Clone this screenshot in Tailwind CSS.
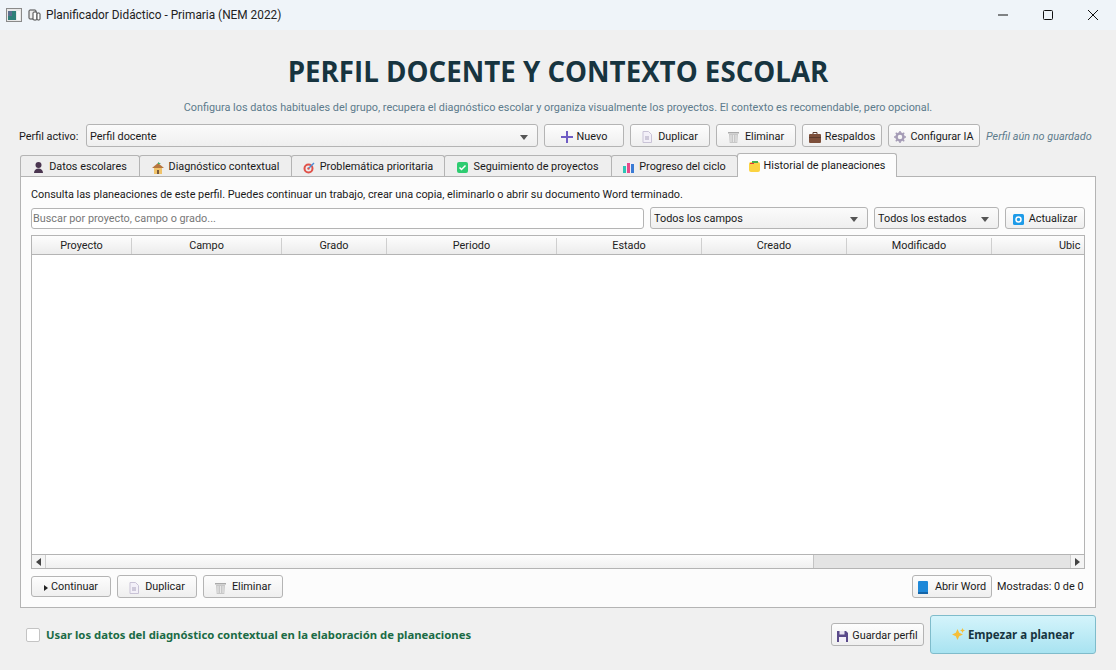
<!DOCTYPE html>
<html lang="es">
<head>
  <meta charset="UTF-8" />
  <title>Planificador Didáctico - Primaria (NEM 2022)</title>
  <script src="https://cdn.jsdelivr.net/npm/@tailwindcss/browser@4"></script>
</head>
<body class="w-[1116px] h-[670px] overflow-hidden bg-[#f0f0f0] text-[10.85px] leading-none text-[#1a1a1a] font-['Roboto','Open_Sans',sans-serif]">

  <!-- Title bar -->
  <header class="h-[30px] bg-[#eff4f9] flex items-center">
    <svg class="ml-[6px] w-[16px] h-[14px]" viewBox="0 0 16 14"><rect x="0.5" y="0.5" width="15" height="13" fill="#e8e8e8" stroke="#8a8a8a"/><rect x="2" y="3" width="8" height="9" fill="#2f7f78"/><rect x="2" y="3" width="4" height="5" fill="#5a6f8f"/><rect x="11" y="3" width="3" height="9" fill="#f8f8f8"/></svg>
    <svg class="ml-[6px] w-[14px] h-[14px]" viewBox="0 0 14 14" fill="none" stroke="#444"><rect x="1" y="2" width="7" height="9" rx="1" fill="#eee"/><rect x="5" y="4" width="4" height="8" rx="1" fill="#fff"/><rect x="9" y="5" width="3" height="7" rx="1" fill="#fff"/></svg>
    <span class="ml-[4px] pt-[2px] text-[11.85px] text-[#222]">Planificador Didáctico - Primaria (NEM 2022)</span>
    <div class="ml-auto flex items-center text-black">
      <div class="w-[46px] flex justify-center"><svg class="w-[10px] h-[10px]" viewBox="0 0 10 10"><path d="M0 5h10" stroke="#111"/></svg></div>
      <div class="w-[44px] flex justify-center"><svg class="w-[10px] h-[10px]" viewBox="0 0 10 10"><rect x="0.5" y="0.5" width="9" height="9" rx="1" fill="none" stroke="#111"/></svg></div>
      <div class="w-[46px] flex justify-center"><svg class="w-[10px] h-[10px]" viewBox="0 0 10 10"><path d="M0 0l10 10M10 0L0 10" stroke="#111"/></svg></div>
    </div>
  </header>

  <main class="px-[20px] relative">
    <h1 class="mt-[26px] h-[32px] flex items-center justify-center text-[27.7px] font-bold font-['Open_Sans',sans-serif] text-[#17343f]">PERFIL DOCENTE Y CONTEXTO ESCOLAR</h1>
    <p class="mt-[13px] h-[14px] flex items-center justify-center text-[#5d7b8c]">Configura los datos habituales del grupo, recupera el diagnóstico escolar y organiza visualmente los proyectos. El contexto es recomendable, pero opcional.</p>

    <!-- Perfil row -->
    <div class="mt-[9px] -ml-px flex items-center h-[23px] whitespace-nowrap">
      <span class="w-[67px] shrink-0 pt-[3px]">Perfil activo:</span>
      <div class="w-[452px] shrink-0 h-[23px] pt-[3px] flex items-center justify-between px-[3px] border border-[#b4b4b4] rounded-[3px] bg-gradient-to-b from-[#fbfbfb] to-[#efefef]">
        <span>Perfil docente</span>
        <span class="mr-[6px] border-x-[4px] border-x-transparent border-t-[5px] border-t-[#555]"></span>
      </div>
      <button class="ml-[6px] w-[80px] shrink-0 h-[23px] pt-[3px] flex items-center justify-center gap-[4px] border border-[#b4b4b4] rounded-[3px] bg-gradient-to-b from-[#fdfdfd] to-[#efefef]">
        <svg class="w-[12px] h-[12px]" viewBox="0 0 12 12"><path d="M6 0v12M0 6h12" stroke="#6f5cc4" stroke-width="2"/></svg>Nuevo
      </button>
      <button class="ml-[6px] w-[80px] shrink-0 h-[23px] pt-[3px] flex items-center justify-center gap-[6px] border border-[#b4b4b4] rounded-[3px] bg-gradient-to-b from-[#fdfdfd] to-[#efefef]">
        <svg class="w-[10px] h-[12px]" viewBox="0 0 10 12"><path d="M1 .5h5.500l3 3v8h-8.500z" fill="#f3f0f8" stroke="#c9c3d6"/><path d="M3 6h4M3 8h4" stroke="#a9a2bb"/></svg>Duplicar
      </button>
      <button class="ml-[6px] w-[80px] shrink-0 h-[23px] pt-[3px] flex items-center justify-center gap-[6px] border border-[#b4b4b4] rounded-[3px] bg-gradient-to-b from-[#fdfdfd] to-[#efefef]">
        <svg class="w-[11px] h-[12px]" viewBox="0 0 11 12"><path d="M0 1h11v1.500h-11z" fill="#aaa"/><path d="M1 3h9l-.7 9h-7.600z" fill="#c8c8c8"/><path d="M3 4v7M5.500 4v7M8 4v7" stroke="#e8e8e8"/></svg>Eliminar
      </button>
      <button class="ml-[6px] w-[80px] shrink-0 h-[23px] pt-[3px] flex items-center justify-center gap-[4px] border border-[#b4b4b4] rounded-[3px] bg-gradient-to-b from-[#fdfdfd] to-[#efefef]">
        <svg class="w-[12px] h-[11px]" viewBox="0 0 12 11"><path d="M4 2V.5h4V2" fill="none" stroke="#5b3a2c"/><rect y="2" width="12" height="9" rx="1" fill="#7d4f3a"/><rect y="5" width="12" height="1" fill="#5b3a2c"/></svg>Respaldos
      </button>
      <button class="ml-[6px] w-[92px] shrink-0 h-[23px] pt-[3px] flex items-center justify-center gap-[4px] border border-[#b4b4b4] rounded-[3px] bg-gradient-to-b from-[#fdfdfd] to-[#efefef]">
        <svg class="w-[12px] h-[12px]" viewBox="0 0 12 12"><circle cx="6" cy="6" r="3.500" fill="none" stroke="#a59cb6" stroke-width="2.500"/><path d="M6 0v2M6 10v2M0 6h2M10 6h2M1.800 1.800l1.400 1.400M8.800 8.800l1.400 1.400M1.800 10.200l1.400-1.400M8.800 3.200l1.400-1.400" stroke="#a59cb6" stroke-width="1.500"/></svg>Configurar IA
      </button>
      <span class="ml-[6px] pt-[3px] italic text-[#5d7b8c]">Perfil aún no guardado</span>
    </div>

    <!-- Tabs -->
    <div class="mt-[5px] h-[24px] flex items-end whitespace-nowrap">
      <div class="w-[120px] h-[21px] pt-[3px] flex items-center justify-center gap-[5px] bg-[#eeeeee] border border-b-0 border-[#b4b4b4] rounded-t-[3px]">
        <svg class="w-[11px] h-[11px]" viewBox="0 0 11 11"><circle cx="5.500" cy="3" r="3" fill="#4a3550"/><path d="M1 11c0-3 2-4.500 4.500-4.500S10 8 10 11z" fill="#4a3550"/></svg>Datos escolares
      </div>
      <div class="w-[153px] -ml-px h-[21px] pt-[3px] flex items-center justify-center gap-[5px] bg-[#eeeeee] border border-b-0 border-[#b4b4b4] rounded-t-[3px]">
        <svg class="w-[12px] h-[12px]" viewBox="0 0 12 12"><rect x="2" y="6" width="8" height="6" fill="#f0c36a"/><path d="M0 6l6-5 6 5z" fill="#b5763f"/><path d="M6 0l3 2H6z" fill="#3fae6a"/><rect x="5" y="8" width="2" height="4" fill="#7a5a3a"/></svg>Diagnóstico contextual
      </div>
      <div class="w-[154px] -ml-px h-[21px] pt-[3px] flex items-center justify-center gap-[5px] bg-[#eeeeee] border border-b-0 border-[#b4b4b4] rounded-t-[3px]">
        <svg class="w-[12px] h-[12px]" viewBox="0 0 12 12"><circle cx="5.500" cy="6.500" r="4" fill="none" stroke="#e0524a" stroke-width="2"/><circle cx="5.500" cy="6.500" r="1.200" fill="#e0524a"/><path d="M6 6l5-5" stroke="#4a90d9" stroke-width="1.500"/></svg>Problemática prioritaria
      </div>
      <div class="w-[168px] -ml-px h-[21px] pt-[3px] flex items-center justify-center gap-[5px] bg-[#eeeeee] border border-b-0 border-[#b4b4b4] rounded-t-[3px]">
        <svg class="w-[11px] h-[11px]" viewBox="0 0 11 11"><rect width="11" height="11" rx="2" fill="#2ecc71"/><path d="M2.500 5.500l2 2 4-4" fill="none" stroke="#fff" stroke-width="1.500"/></svg>Seguimiento de proyectos
      </div>
      <div class="w-[127px] -ml-px h-[21px] pt-[3px] flex items-center justify-center gap-[5px] bg-[#eeeeee] border border-b-0 border-[#b4b4b4] rounded-t-[3px]">
        <svg class="w-[11px] h-[11px]" viewBox="0 0 11 11"><rect width="11" height="11" fill="#f1eef6"/><rect x="0" y="4" width="3" height="7" fill="#2ec4b6"/><rect x="4" y="1" width="3" height="10" fill="#e84a8a"/><rect x="8" y="2" width="3" height="9" fill="#3a7bd5"/></svg>Progreso del ciclo
      </div>
      <div class="w-[160px] -ml-px h-[24px] pt-[2px] -mb-px z-10 flex items-center justify-center gap-[4px] bg-[#fcfcfc] border border-b-0 border-[#b4b4b4] rounded-t-[3px]">
        <svg class="w-[11px] h-[11px]" viewBox="0 0 11 11"><rect y="1" width="11" height="10" rx="2" fill="#fbd341"/><rect x="3" y="0" width="6" height="2" fill="#4caf50"/><rect x="1" y="2" width="4" height="1" fill="#e53935"/></svg>Historial de planeaciones
      </div>
    </div>

    <!-- Panel -->
    <section class="h-[432px] border border-[#b4b4b4] bg-[#fcfcfc] px-[10px]">
      <p class="mt-[12px] h-[13px] flex items-center">Consulta las planeaciones de este perfil. Puedes continuar un trabajo, crear una copia, eliminarlo o abrir su documento Word terminado.</p>

      <div class="mt-[5px] flex items-center gap-[6px] h-[22px]">
        <div class="w-[613px] h-[21px] pt-[2px] px-[1px] flex items-center text-[#777] bg-white border border-[#b4b4b4] rounded-[3px]">Buscar por proyecto, campo o grado...</div>
        <div class="w-[218px] h-[22px] pt-[2px] px-[3px] flex items-center justify-between border border-[#b4b4b4] rounded-[3px] bg-gradient-to-b from-[#fbfbfb] to-[#efefef]">
          <span>Todos los campos</span><span class="mr-[6px] border-x-[4px] border-x-transparent border-t-[5px] border-t-[#555]"></span>
        </div>
        <div class="w-[125px] h-[22px] pt-[2px] px-[3px] flex items-center justify-between border border-[#b4b4b4] rounded-[3px] bg-gradient-to-b from-[#fbfbfb] to-[#efefef]">
          <span>Todos los estados</span><span class="mr-[6px] border-x-[4px] border-x-transparent border-t-[5px] border-t-[#555]"></span>
        </div>
        <button class="w-[80px] h-[22px] pt-[2px] flex items-center justify-center gap-[5px] border border-[#b4b4b4] rounded-[3px] bg-gradient-to-b from-[#fdfdfd] to-[#efefef]">
          <svg class="w-[11px] h-[11px]" viewBox="0 0 11 11"><rect width="11" height="11" rx="1.500" fill="#1e9be8"/><circle cx="5.500" cy="5.500" r="2.500" fill="none" stroke="#fff" stroke-width="1.500"/></svg>Actualizar
        </button>
      </div>

      <!-- Table -->
      <div class="mt-[6px] w-[1054px] h-[334px] border border-[#b4b4b4] bg-white flex flex-col overflow-hidden">
        <div class="h-[19px] shrink-0 pt-[2px] flex text-[#222] border-b border-[#b4b4b4] bg-gradient-to-b from-[#fdfdfd] to-[#ececec]">
          <div class="w-[100px] shrink-0 flex items-center justify-center border-r border-[#cfcfcf]">Proyecto</div>
          <div class="w-[150px] shrink-0 flex items-center justify-center border-r border-[#cfcfcf]">Campo</div>
          <div class="w-[105px] shrink-0 flex items-center justify-center border-r border-[#cfcfcf]">Grado</div>
          <div class="w-[170px] shrink-0 flex items-center justify-center border-r border-[#cfcfcf]">Periodo</div>
          <div class="w-[145px] shrink-0 flex items-center justify-center border-r border-[#cfcfcf]">Estado</div>
          <div class="w-[145px] shrink-0 flex items-center justify-center border-r border-[#cfcfcf]">Creado</div>
          <div class="w-[145px] shrink-0 flex items-center justify-center border-r border-[#cfcfcf]">Modificado</div>
          <div class="flex-1 flex items-center pl-[67px] whitespace-nowrap">Ubic</div>
        </div>
        <div class="flex-1"></div>
        <!-- Scrollbar -->
        <div class="h-[14px] shrink-0 flex border-t border-[#b4b4b4] bg-[#e4e4e4]">
          <div class="w-[14px] flex items-center justify-center bg-[#f4f4f4] border-r border-[#cfcfcf]"><span class="border-y-[4px] border-y-transparent border-r-[5px] border-r-[#444]"></span></div>
          <div class="w-[768px] bg-gradient-to-b from-[#fdfdfd] to-[#f0f0f0] border-r border-[#c4c4c4]"></div>
          <div class="flex-1"></div>
          <div class="w-[14px] flex items-center justify-center bg-[#f4f4f4] border-l border-[#cfcfcf]"><span class="border-y-[4px] border-y-transparent border-l-[5px] border-l-[#444]"></span></div>
        </div>
      </div>

      <!-- Bottom actions -->
      <div class="mt-[5px] flex items-center h-[24px]">
        <button class="w-[80px] h-[21px] pt-[3px] flex items-center justify-center gap-[3px] border border-[#b4b4b4] rounded-[3px] bg-gradient-to-b from-[#fdfdfd] to-[#efefef]">
          <span class="border-y-[3px] border-y-transparent border-l-[4px] border-l-[#222]"></span>Continuar
        </button>
        <button class="ml-[6px] w-[80px] h-[23px] pt-[3px] flex items-center justify-center gap-[6px] border border-[#b4b4b4] rounded-[3px] bg-gradient-to-b from-[#fdfdfd] to-[#efefef]">
          <svg class="w-[10px] h-[12px]" viewBox="0 0 10 12"><path d="M1 .5h5.500l3 3v8h-8.500z" fill="#f3f0f8" stroke="#c9c3d6"/><path d="M3 6h4M3 8h4" stroke="#a9a2bb"/></svg>Duplicar
        </button>
        <button class="ml-[6px] w-[80px] h-[23px] pt-[3px] flex items-center justify-center gap-[6px] border border-[#b4b4b4] rounded-[3px] bg-gradient-to-b from-[#fdfdfd] to-[#efefef]">
          <svg class="w-[11px] h-[12px]" viewBox="0 0 11 12"><path d="M0 1h11v1.500h-11z" fill="#aaa"/><path d="M1 3h9l-.7 9h-7.600z" fill="#c8c8c8"/><path d="M3 4v7M5.500 4v7M8 4v7" stroke="#e8e8e8"/></svg>Eliminar
        </button>
        <button class="ml-auto w-[80px] h-[23px] pt-[3px] flex items-center justify-center gap-[7px] border border-[#b4b4b4] rounded-[3px] bg-gradient-to-b from-[#fdfdfd] to-[#efefef]">
          <svg class="w-[10px] h-[13px]" viewBox="0 0 10 13"><rect width="10" height="13" rx="1" fill="#1e88d8"/><rect y="11" width="10" height="2" fill="#1565a8"/></svg>Abrir Word
        </button>
        <span class="ml-[5px] pt-[3px] w-[88px] whitespace-nowrap">Mostradas: 0 de 0</span>
      </div>
    </section>

    <!-- Footer -->
    <div class="mt-[7px] flex items-center h-[39px]">
      <span class="ml-[6px] w-[14px] h-[14px] bg-white border border-[#c4c4c4] rounded-[2px]"></span>
      <span class="ml-[6px] font-bold text-[11.3px] font-['Noto_Sans',sans-serif] text-[#1a6b45]">Usar los datos del diagnóstico contextual en la elaboración de planeaciones</span>
      <button class="ml-auto w-[93px] h-[23px] pt-[3px] flex items-center justify-center gap-[4px] border border-[#b4b4b4] rounded-[3px] bg-gradient-to-b from-[#fdfdfd] to-[#efefef]">
        <svg class="w-[11px] h-[11px]" viewBox="0 0 11 11"><path d="M0 0h9l2 2v9H0z" fill="#5a4a8a"/><rect x="2.500" y="0" width="5" height="3.500" fill="#e8e4f0"/><rect x="2" y="6" width="7" height="5" fill="#f3f0f8"/></svg>Guardar perfil
      </button>
      <button class="ml-[6px] w-[166px] h-[39px] flex items-center justify-center gap-[3px] font-bold text-[11.5px] font-['Noto_Sans',sans-serif] text-[#17343f] border border-[#7fbccb] rounded-[3px] bg-gradient-to-b from-[#d4f4fb] to-[#a8e3f1]">
        <svg class="w-[13px] h-[13px]" viewBox="0 0 13 13"><path d="M5.500 1l1.700 3.800L11 6.500 7.200 8.200 5.500 12 3.800 8.200 0 6.500l3.800-1.700z" fill="#f5bf3a"/><path d="M10.500 0l.8 1.700 1.700.8-1.700.8-.8 1.700-.8-1.700L8 2.500l1.700-.8z" fill="#f5bf3a"/></svg>Empezar a planear
      </button>
    </div>
  </main>
</body>
</html>
